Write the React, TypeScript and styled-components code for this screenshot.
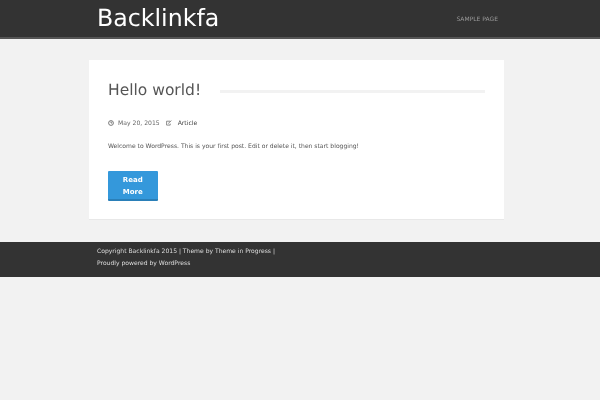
import React from "react";
import styled, { createGlobalStyle, css } from "styled-components";

const soft = css`
  filter: blur(0.3px);
`;

const Global = createGlobalStyle`
  html, body { margin: 0; padding: 0; background: #f2f2f2; }
  body { font-family: "DejaVu Sans", sans-serif; height: 400px; overflow: hidden; text-rendering: geometricPrecision; }
`;

const Header = styled.header`
  height: 37px;
  background: #333333;
  border-bottom: 2px solid #555555;
  padding: 0 102px 0 97px;
  display: flex;
  justify-content: space-between;
  align-items: flex-start;
`;

const Brand = styled.div`
  ${soft}
  font-size: 23.7px;
  line-height: 37px;
  color: #ffffff;
`;

const NavLink = styled.a`
  ${soft}
  font-size: 6px;
  line-height: 39px;
  color: #999999;
  text-transform: uppercase;
`;

const Main = styled.main`
  width: 415px;
  margin: 21px 0 22px 89px;
  padding: 20px 19px 0;
  box-sizing: border-box;
  height: 160px;
  background: #ffffff;
  border-bottom: 1px solid #e8e8e8;
`;

const TitleRow = styled.div`
  display: flex;
  align-items: center;
  gap: 19px;
  height: 21px;
`;

const Title = styled.h1`
  ${soft}
  margin: 0;
  font-size: 15.5px;
  font-weight: 400;
  line-height: 21px;
  color: #555555;
  white-space: nowrap;
`;

const Rule = styled.div`
  ${soft}
  flex: 1;
  height: 3px;
  margin-top: 1px;
  background: #f2f2f2;
`;

const Meta = styled.div`
  ${soft}
  display: flex;
  align-items: center;
  margin-top: 16px;
  height: 12px;
  font-size: 6.1px;
`;

const MetaIcon = styled.svg`
  width: 6px;
  height: 6px;
  flex: none;
  margin-right: 4px;
`;

const MetaDate = styled.span`
  color: #666666;
  margin-right: 6px;
`;

const MetaLink = styled.a`
  color: #444444;
  margin-left: 2px;
`;

const Excerpt = styled.p`
  ${soft}
  margin: 12px 0 0;
  font-size: 6.05px;
  line-height: 12px;
  color: #555555;
`;

const Button = styled.a`
  ${soft}
  display: block;
  width: 49.5px;
  height: 30px;
  margin-top: 18px;
  box-sizing: border-box;
  padding-top: 3px;
  background: #3498db;
  border-bottom: 2px solid #2a7fb8;
  border-radius: 1px;
  color: #ffffff;
  font-size: 7px;
  font-weight: 700;
  line-height: 12px;
  text-align: center;
`;

const Footer = styled.footer`
  height: 35px;
  box-sizing: border-box;
  background: #333333;
  padding: 4px 0 0 97px;
  font-size: 6.05px;
  line-height: 11.5px;
  color: #dddddd;
`;

const FooterText = styled.div`
  ${soft}
  width: 190px;
`;

export default function App() {
  return (
    <>
      <Global />
      <Header>
        <Brand>Backlinkfa</Brand>
        <NavLink>Sample Page</NavLink>
      </Header>
      <Main>
        <TitleRow>
          <Title>Hello world!</Title>
          <Rule />
        </TitleRow>
        <Meta>
          <MetaIcon viewBox="0 0 10 10" fill="none" stroke="#555" strokeWidth="1.3">
            <circle cx="5" cy="5" r="4" />
            <path d="M5 2.5V5H7" />
          </MetaIcon>
          <MetaDate>May 20, 2015</MetaDate>
          <MetaIcon viewBox="0 0 10 10" fill="none" stroke="#555" strokeWidth="1.1">
            <path d="M7 2H1V8.5H7V6" />
            <path d="M3.5 6L9 1" />
          </MetaIcon>
          <MetaLink>Article</MetaLink>
        </Meta>
        <Excerpt>Welcome to WordPress. This is your first post. Edit or delete it, then start blogging!</Excerpt>
        <Button>Read<br />More</Button>
      </Main>
      <Footer>
        <FooterText>Copyright Backlinkfa 2015 | Theme by Theme in Progress | Proudly powered by WordPress</FooterText>
      </Footer>
    </>
  );
}
